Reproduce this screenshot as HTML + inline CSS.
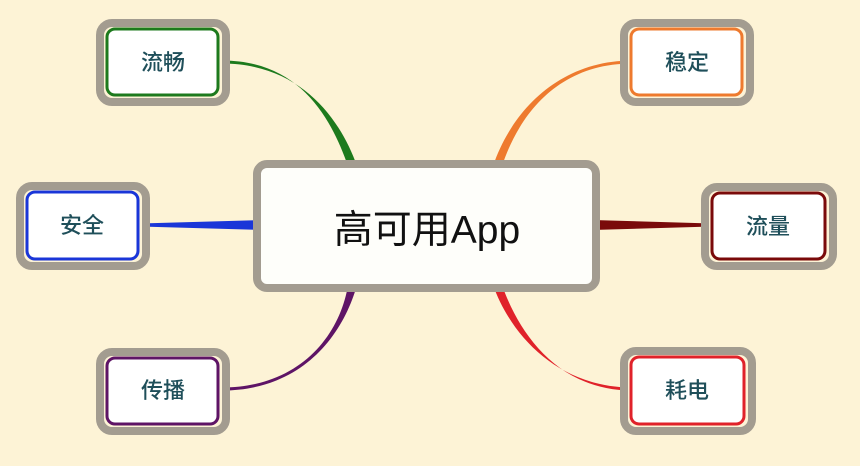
<!DOCTYPE html>
<html><head><meta charset="utf-8"><style>
html,body{margin:0;padding:0;background:#fdf3d6;}
svg{display:block}
text{font-family:"Liberation Sans","Noto Sans CJK SC",sans-serif;}
.t{font-size:22px;fill:#1f4f5a;text-anchor:middle;font-weight:500;}
</style></head><body>
<svg width="860" height="466" viewBox="0 0 860 466">
<rect width="860" height="466" fill="#fdf3d6"/>
<path d="M222,60.5 C300,60.5 331,118 348,166 L357,166 C340,118 300,63.5 222,63.5 Z" fill="#1d7a1d"/>
<path d="M632,60.5 C560,60.5 512,110 493,166 L502,166 C520,112 560,63.5 632,63.5 Z" fill="#ee7a2e"/>
<path d="M140,223.5 L262,220 L262,230 L140,226.5 Z" fill="#1a36d8"/>
<path d="M712,223.5 L592,220 L592,230 L712,226.5 Z" fill="#7a0a0a"/>
<path d="M222,387.5 C300,387.5 340,335 348,285 L357,285 C342,338 300,390.5 222,390.5 Z" fill="#5e1466"/>
<path d="M632,387.5 C560,387.5 512,338 493,285 L502,285 C520,336 560,390.5 632,390.5 Z" fill="#e0222a"/>
<rect x="257" y="164" width="339" height="124" rx="10" fill="#fefefa" stroke="#a39c90" stroke-width="8"/>
<text x="427" y="243" style="font-size:39px;fill:#111;text-anchor:middle">高可用App</text>
<g>
<rect x="100" y="23" width="126" height="79" rx="12" fill="#fdf3d6" stroke="#a39c90" stroke-width="8"/>
<rect x="107" y="29" width="111" height="66" rx="8" fill="#fff" stroke="#1d7a1d" stroke-width="3"/>
<text class="t" x="163" y="70">流畅</text>
</g>
<g>
<rect x="20" y="186" width="126" height="80" rx="12" fill="#fdf3d6" stroke="#a39c90" stroke-width="8"/>
<rect x="27" y="192" width="111" height="67" rx="8" fill="#fff" stroke="#1a36d8" stroke-width="3"/>
<text class="t" x="82" y="233">安全</text>
</g>
<g>
<rect x="100" y="352" width="126" height="79" rx="12" fill="#fdf3d6" stroke="#a39c90" stroke-width="8"/>
<rect x="107" y="358" width="111" height="66" rx="8" fill="#fff" stroke="#5e1466" stroke-width="3"/>
<text class="t" x="163" y="398">传播</text>
</g>
<g>
<rect x="624" y="23" width="126" height="79" rx="12" fill="#fdf3d6" stroke="#a39c90" stroke-width="8"/>
<rect x="631" y="29" width="111" height="66" rx="8" fill="#fff" stroke="#ee7a2e" stroke-width="3"/>
<text class="t" x="687" y="70">稳定</text>
</g>
<g>
<rect x="705" y="187" width="128" height="79" rx="12" fill="#fdf3d6" stroke="#a39c90" stroke-width="8"/>
<rect x="712" y="193" width="113" height="66" rx="8" fill="#fff" stroke="#7a0a0a" stroke-width="3"/>
<text class="t" x="768" y="234">流量</text>
</g>
<g>
<rect x="624" y="351" width="128" height="80" rx="12" fill="#fdf3d6" stroke="#a39c90" stroke-width="8"/>
<rect x="631" y="357" width="113" height="67" rx="8" fill="#fff" stroke="#e0222a" stroke-width="3"/>
<text class="t" x="687" y="398">耗电</text>
</g>
</svg>
</body></html>
